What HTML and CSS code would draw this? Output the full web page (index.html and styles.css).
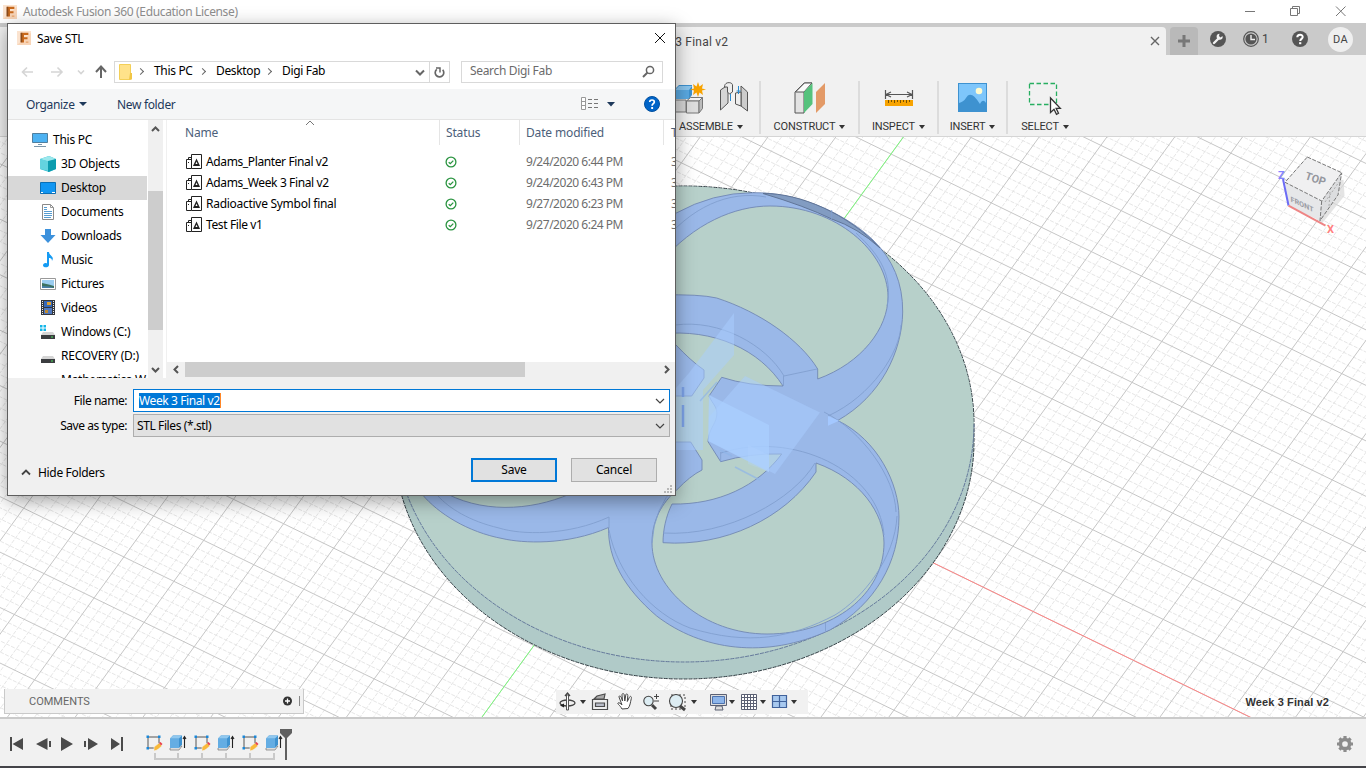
FILE: index.html
```html
<!DOCTYPE html>
<html lang="en">
<head>
<meta charset="utf-8">
<title>Autodesk Fusion 360 (Education License)</title>
<link rel="stylesheet" href="styles.css">
</head>
<body>
<svg width="0" height="0" class="defs">
  <defs>
    <symbol id="fusion" viewBox="0 0 16 16"><rect width="16" height="16" fill="#fbe3cf"/><path d="M0 16 16 2V16Z" fill="#f8d5b8"/><path d="M5 2h8v2.500H8v2.500h4v2.500H8V13H5Z" fill="#c8691c"/><path d="M4 2h2v11H4z" fill="#8b4a1a"/><path d="M10 12h3v1.500h-3z" fill="#e9a56d"/></symbol>
    <symbol id="stl" viewBox="0 0 16 16"><path d="M5.500 14.500V.500h10v14ZM5 5.500H.500v9h5M2.500 5.500v-2h3" fill="#fff" stroke="#222" stroke-width="1"/><path d="M10.500 4.500 7 12H14Z" fill="#222"/><path d="m10.500 7.500-1 2.500h2Z" fill="#fff"/><path d="M2.500 8v1" stroke="#222"/></symbol>
    <symbol id="ok" viewBox="0 0 12 12"><circle cx="6" cy="6" r="4.900" fill="#fff" stroke="#2a9440" stroke-width="1.300"/><path d="M3.700 6.200 5.300 7.700 8.300 4.600" fill="none" stroke="#2a9440" stroke-width="1.300"/></symbol>
    <symbol id="drive" viewBox="0 0 16 16"><path d="M3 8h10l2 3H1Z" fill="#d5d5d5"/><path d="M1 11h14v4H1z" fill="#3b3d40"/><path d="M11 12.500h2v1h-2z" fill="#4be05a"/></symbol>
    <symbol id="sketch" viewBox="0 0 18 18"><path d="M3 3h11v11H3z" fill="none" stroke="#555" stroke-width="1"/><path d="M1.500 1.500h2.500v2.500H1.500zM13 1.500h2.500v2.500H13zM1.500 13h2.500v2.500H1.500z" fill="#1b87d8"/><path d="m9 13 5-4 3 3-5 4-3 1Z" fill="#f9b93a" stroke="#f2f2f2" stroke-width=".6"/><path d="m14 9 1.500-1 2 2-1.500 1.500Z" fill="#e8404b"/></symbol>
    <symbol id="extrude" viewBox="0 0 18 18"><path d="m1 14 3-2h9l-3 4H1Z" fill="#ddd" stroke="#777" stroke-width=".7"/><path d="M1 4.500 4 1.500h9v9L10 14H1Z" fill="#3e92d0"/><path d="M1 4.500h9V14H1z" fill="#64ade3"/><path d="M1 4.500 4 1.500h9l-3 3Z" fill="#90c8ef"/><path d="M15.500 14V3M14 5l1.500-2.500L17 5" fill="none" stroke="#222" stroke-width="1.100"/></symbol>
  </defs>
</svg>
<div class="app">
  <header class="titlebar">
    <svg class="i16 applogo"><use href="#fusion"/></svg>
    <span class="app-title">Autodesk Fusion 360 (Education License)</span>
    <svg class="winctl" width="110" height="22" viewBox="0 0 110 22" fill="none" stroke="#777"><path d="M5 10.500h10M50.500 7.500h7v7h-7zM52.500 7.500v-2h7v7h-2M96 5.500l9.500 9.500M105.500 5.500 96 15"/></svg>
  </header>
  <div class="tabbar">
    <div class="tab"><span class="tab-name">Week 3 Final v2</span>
      <svg width="12" height="12" viewBox="0 0 12 12" stroke="#666" stroke-width="1.400"><path d="m2 2 8 8M10 2 2 10"/></svg></div>
    <div class="newtab"><svg width="14" height="14" viewBox="0 0 14 14" stroke="#777" stroke-width="3"><path d="M7 1v12M1 7h12"/></svg></div>
    <svg class="t-ext" width="16" height="16" viewBox="0 0 16 16"><circle cx="8" cy="8" r="8" fill="#555"/><path d="m4 12 4.500-4.500" stroke="#f1f1f1" stroke-width="2.400" stroke-linecap="round"/><path d="M12.500 5a3 3 0 1 1-3-2.200L9 5l1.500 1.400Z" fill="#f1f1f1"/></svg>
    <svg class="t-clock" width="16" height="16" viewBox="0 0 16 16"><circle cx="8" cy="8" r="7.300" fill="none" stroke="#555" stroke-width="1.200"/><circle cx="8" cy="8" r="5.600" fill="#555"/><path d="M8 4v4.500h4" fill="none" stroke="#eee" stroke-width="1.400"/></svg>
    <span class="t-num">1</span>
    <svg class="t-help" width="16" height="16" viewBox="0 0 16 16"><circle cx="8" cy="8" r="8" fill="#555"/><path d="M5.300 6.200C5.300 2.700 10.800 2.900 10.700 6c0 1.800-2.500 2-2.500 4" fill="none" stroke="#fff" stroke-width="2"/><path d="M7.100 11.200h2.200v2H7.100z" fill="#fff"/></svg>
    <span class="avatar">DA</span>
  </div>
  <div class="toolbar">
    <div class="tool assemble">
      <div class="icons">
      <svg width="34" height="34" viewBox="0 0 34 34"><path d="M1 7 5 3h13v10l-3 4H1Z" fill="#3e92d0"/><path d="M1 8h14v9H1z" fill="#5aa9e2"/><path d="m1 8 4-4h13l-3 4Z" fill="#8bc6ef"/><path d="M0 18h12v12H0" fill="#d5d5d5" stroke="#777"/><path d="m12.500 19 4-3.500h12l-3.500 3.500Z" fill="#f5f5f5" stroke="#777"/><path d="M12.500 19H25v12H12.500z" fill="#ddd" stroke="#777"/><path d="m25 19 3.500-3.500v11L25 31Z" fill="#bbb" stroke="#777"/><path d="m24 0 1.500 4.500L29 2l-1 4.500 4 1-4 1 1 4.500-3.500-2.500L24 15l-1.500-4.500L19 13l1-4.500-4-1 4-1L19 2l3.500 2.500Z" fill="#f7a300"/></svg>
      <svg width="30" height="30" viewBox="0 0 30 30"><path d="M1.500 8 9 3v18l-7.500 7Z" fill="#d5d5d5" stroke="#555"/><path d="M5.500 5c0-6 8-5 8-2v7l-3 2-2-2V5Z" fill="#eee" stroke="#555"/><path d="m22 4 6.500 6v19L22 24Z" fill="#ccc" stroke="#555"/><path d="m16.500 11 5.500-1v14l-5.500-2Z" fill="#eee" stroke="#555"/><path d="M19.500 4v8M17.500 9h4M11.500 12v7" fill="none" stroke="#288bd0"/></svg>
      </div><span class="tlabel">ASSEMBLE<i></i></span>
    </div>
    <div class="tool construct"><div class="icons"><svg width="32" height="32" viewBox="0 0 32 32"><path d="M1 10 10 1h8l-8 8v22H1Z" fill="#e3e3e3" stroke="#555"/><path d="m1.500 10 9-9H18l-8 9Z" fill="#fafafa" stroke="#555"/><path d="M10 10 18.500 1v21L10 31Z" fill="#55c27c"/><path d="M22 10 31 1v21l-9 9Z" fill="#e39a67"/></svg></div><span class="tlabel">CONSTRUCT<i></i></span></div>
    <div class="tool inspect"><div class="icons"><svg width="30" height="32" viewBox="0 0 30 32"><path d="M1.500 8v9M28.500 8v9M2 12.500h26M7 10l-5 2.500L7 15M23 10l5 2.500-5 2.500" fill="none" stroke="#555" stroke-width="1.200"/><path d="M1 18h28v6H1z" fill="#f7a300"/><path d="M4.500 18v3M7.500 18v2M10.500 18v3M13.500 18v2M16.500 18v3M19.500 18v2M22.500 18v3M25.500 18v2" stroke="#765000"/></svg></div><span class="tlabel">INSPECT<i></i></span></div>
    <div class="tool insert"><div class="icons"><svg width="29" height="30" viewBox="0 0 29 30"><path d="M0 1h29v29H0z" fill="#3e92d0"/><path d="M1 2h27v19c-2-3-4-3-6 1-6-10-11-12-14-6-2 3-4 4-7 5Z" fill="#7ec6fb"/><circle cx="21" cy="9" r="3.300" fill="#fffbd0"/></svg></div><span class="tlabel">INSERT<i></i></span></div>
    <div class="tool select"><div class="icons"><svg width="34" height="34" viewBox="0 0 34 34"><rect x="1.500" y="1.500" width="27" height="21" fill="none" stroke="#27ae60" stroke-width="1.300" stroke-dasharray="4.500 2.500"/><path d="M22.500 16v14.500l3.500-3.200 2.500 5 2-1-2.400-5h4.200Z" fill="#fff" stroke="#333" stroke-width="1.300"/></svg></div><span class="tlabel">SELECT<i></i></span></div>
  </div>
  <main class="viewport">
    <svg class="scene" width="1366" height="580" viewBox="0 137 1366 580">
      <path id="minor" stroke="#e6e6e6" stroke-dasharray="4 1.500"/><path id="major" stroke="#c6c6c6"/>
      <path d="M903.300 137 482 717" stroke="#7dfb7d"/><path d="M684 441.500 1252 718" stroke="#ff8585"/>
      <g>
        <path d="M394 424A290 238 0 0 1 974 424V441A290 238 0 0 1 394 441Z" fill="#b0cac8" stroke="#333f45" stroke-dasharray="4 1"/>
        <ellipse cx="684" cy="424" rx="289.500" ry="237.500" fill="#b7d0ca"/>
        <path d="M974 424A290 238 0 0 1 394 424" fill="none" stroke="#65799b" stroke-dasharray="4 1"/>
      </g>
      <g stroke="#7288b3" stroke-width=".9">
        <path fill="#9ab8e8" d="M640 230 675.700 213.300Q713 192.700 753 192.700C800 192 847 215 873 240Q903 269 902.700 312C902 352 881 396 837.700 420.500C878 440 899 484 899 517C899 561 876 604 830 630C765 660 701 650 656.700 616C624 588 608 559 608.500 527.500C566 546 522 543 503 538.700C467 532 438 513 422.700 495L400 440 500 300Z"/>
        <path fill="#b7d0ca" d="M440 490C480 514 530 511 570 494L570 480H440Z"/>
        <path fill="#b7d0ca" d="M660 263C694 223 735 206 770 206C836 206 888 252 888 297C888 328 862 363 817.700 379V369C800 340 760 312 716.700 298Q700 294 660 295Z"/>
        <path fill="#b7d0ca" d="M660 334C714 328 760 350 783 386Q748 386 721.700 377.300L709 396C713 405 718 407 716.700 416C715 426 709 428 708 441.700L720.700 461.700Q750 453 781.700 454C758 486 718 505 672 504C666 516 663 530 663 542.700C724 547 784 519 816 472V463C861 479 884 514 884 543C884 594 834 634 767 634C704 634 652 589 652 543C652 520 662 503 676.700 490Q690 476 702 470V460L690.700 442H660V396H691.700L704 378V370Q691 361 675 344Z"/>
        <path fill="#829cc2" stroke="#5b6f91" d="M763 193.500C800 193 848 214 880 248Q858 228 831.700 219 805 206 763 193.500Z"/>
        <g fill="none" stroke="#819fcf">
          <path d="M660 246C690 207 729 190 766 197M831.700 210v9M675 325C720 319 766 345 784 376L817 369M783.500 376v10M828 416C872 396 900 352 901 325M856 233C881 256 893 277 887 306"/>
          <path d="M721 453C792 430 879 470 884 535M720.700 452v10M824 412C862 431 895 477 896 512M663 533C728 537 794 499 815 463M609 517v11M609 517C568 536 521 535 499 528 469 521 449 508 438 496M609 530C617 574 652 614 690 628C749 646 791 638 835 615 863 598 895 558 897 516M825.500 623v8M652 543Q654 507 676 486"/>
        </g>
      </g>
      <g>
        <path d="M734 313v42l-31 35v60h-27v-62l13-15Z" fill="#a9cdff" opacity=".5"/>
        <path d="m745 376 75 36.500L775 474l-66-33v-24Z" fill="#a9cdff" opacity=".5"/>
        <path d="m709 395 60 30v47l-61-31Z" fill="#a9cfff" opacity=".75"/>
        <path d="m748 445 21 10v17l-21-8Z" fill="#b3d5ff" opacity=".3"/>
        <path d="m828 416 11 4.700-11 5Z" fill="#a4c8ff"/>
        <path d="M683 405v22M683 387v10" stroke="#7da3e9" stroke-width="2.500"/>
        <path d="m700 401 17-19M720 450l12 6M735 467l25 13" stroke="#8fb5e8" stroke-width="1.500" opacity=".7"/>
      </g>
      <g class="cube">
        <path d="m1320 222 22-27-1-15" fill="none" stroke="#d9d9d9" stroke-width="5" opacity=".7"/>
        <path d="m1285 182.300 36.700 18.700-1.700 19.700-31.700-15Z" fill="#e6e7e9"/><path d="m1321.700 201 20-28.300L1338 195l-18 25.700Z" fill="#dcdddf"/>
        <path d="m1307.300 157 34.400 15.700-20 28.300-36.700-18.700Z" fill="#f0f0f1"/>
        <path d="m1307.300 157 34.400 15.700-20 28.300-36.700-18.700ZM1321.700 201l-1.700 19.700 18-25.700 3.700-22.300" fill="none" stroke="#777" stroke-dasharray="4 1.500"/>
        <path d="m1330 192-1 14M1325 202l14-20" stroke="#aaa" stroke-dasharray="2 2"/>
        <path d="m1283 179 5.500 26.500" stroke="#6c6cf5" stroke-width="2"/><path d="m1288.500 205.700 37 20" stroke="#ee8585" stroke-width="2"/>
        <text transform="matrix(.93 .32 -.3 .95 1304.500 179)" class="facet">TOP</text><text transform="matrix(.9 .42 .05 .9 1291 206)" class="facef" y="-5">FRONT</text>
        <text x="1278" y="179" class="axis" fill="#8585ff">Z</text><text x="1327" y="232.500" class="axis" fill="#ff8080">X</text>
      </g>
    </svg>
    <div class="comments"><span>COMMENTS</span><svg width="18" height="14" viewBox="0 0 18 14"><circle cx="3.500" cy="7" r="4.500" transform="translate(1 0)" fill="#333"/><path d="M4.500 4.500v5M2 7h5" stroke="#fff" stroke-width="1.300"/><path d="M16.500 2v10" stroke="#888"/></svg></div>
    <div class="navbar">
      <svg width="249" height="24" viewBox="0 0 249 24">
        <g fill="none" stroke="#444" stroke-width="1.300"><ellipse cx="11.500" cy="13" rx="7.500" ry="3"/><path d="M10.500 5h2v15h-2z" fill="#fff" stroke="#555" stroke-width="1"/><path d="m9 6 2.500-3L14 6"/><path d="m4 15.500 4-2v4Z" fill="#222" stroke="none"/></g>
        <g fill="#eee" stroke="#4b4b4b" stroke-width="1.200"><path d="m38 9 3-3 8-2-1 5Z" fill="#aaa"/><path d="M36.500 9.500h15v10h-15z"/><path d="M39.500 13h9v3.500h-9z" fill="#b8bcc8"/></g>
        <path d="M66 19c-2-4-5-5-4-6s3 1 4 2L63 7c0-2 2-1 2.500 1l1 3-.5-6c0-2 2-2 2.200 0l.6 6 1-6c.5-2 2-1 2 .5l-.5 6 2-4c1-2 2.500-1 2 1-1 4-1 7-3.300 10Z" fill="#fff" stroke="#444"/>
        <g stroke="#444"><circle cx="92.500" cy="11" r="4.700" fill="#ddedf3" stroke-width="1.100"/><path d="m96 15 4 4" stroke-width="3"/><path d="M98 6.500h5M100.500 4v5M98 11h5"/><path d="M115 5h14v14h-14z" fill="none" stroke-dasharray="2 2"/><circle cx="120" cy="11" r="6.500" fill="#ddedf3" stroke-width="1.100"/><path d="m124 16 5 4" stroke-width="3"/></g>
        <g stroke="#5b6073"><path d="M154.500 4.500h16v11h-16z" fill="#ddd"/><path d="M156.500 6.500h12v7h-12z" fill="#8db5ea" stroke="#4d72ae"/><path d="M160 16h6l1 4h-8Z" fill="#ddd"/><path d="M185.500 4.500h15v15h-15z" fill="#fff"/><path d="M188.500 4.500v15M191.500 4.500v15M194.500 4.500v15M197.500 4.500v15M185.500 7.500h15M185.500 10.500h15M185.500 13.500h15M185.500 16.500h15"/><path d="M216.500 5.500h7v6h-7zM223.500 5.500h7v6h-7zM216.500 11.500h7v6h-7zM223.500 11.500h7v6h-7z" fill="#a8c9ef" stroke="#40629b" stroke-width="1.200"/></g>
        <path d="M24 10h6l-3 4ZM135 10h6l-3 4ZM173 10h6l-3 4ZM204 10h6l-3 4ZM235 10h6l-3 4Z" fill="#333"/>
      </svg>
    </div>
    <span class="docname">Week 3 Final v2</span>
  </main>
  <footer class="timeline">
    <svg class="play" width="125" height="20" viewBox="0 0 125 20" fill="#4b4b4b"><path d="M3 3h2v14H3zM16 4v12L5.500 10ZM40.500 4v12L29 10ZM38 7h1v6h-1zM42 7h2v6h-2zM54 3l12 7-12 7ZM77 7h2v6h-2zM81 4l10 6-10 6ZM104 4l9 6-9 6ZM114 3h2v14h-2z"/></svg>
    <div class="features">
      <div class="frow"><svg><use href="#sketch"/></svg><svg><use href="#extrude"/></svg><svg><use href="#sketch"/></svg><svg><use href="#extrude"/></svg><svg><use href="#sketch"/></svg><svg><use href="#extrude"/></svg></div>
      <svg width="124" height="8" viewBox="0 0 124 8" fill="none" stroke="#c9c9c9" stroke-width="2"><path d="M2 0v6h119V0M25 0v6M49 0v6M73 0v6M97 0v6"/></svg>
    </div>
    <svg class="marker" width="14" height="34" viewBox="0 0 14 34" fill="#606060"><path d="M1 1h12v4L8 10v22H6V10L1 5Z"/></svg>
    <svg class="gear" width="18" height="18" viewBox="-9 -9 18 18"><circle r="4.600" fill="none" stroke="#8c8c8c" stroke-width="3.500"/><path d="M0-8v3M0 8V5M-8 0h3M8 0H5M-5.600-5.600l2 2M5.600 5.600l-2-2M-5.600 5.600l2-2M5.600-5.600l-2 2" stroke="#8c8c8c" stroke-width="3.200"/></svg>
  </footer>
  <div class="taskline"></div>
</div>

<section class="dialog">
  <div class="d-title"><svg class="i16"><use href="#fusion"/></svg><span>Save STL</span><svg class="d-close" width="12" height="12" viewBox="0 0 12 12" stroke="#111"><path d="m1 1 10 10M11 1 1 11"/></svg></div>
  <div class="d-nav">
    <svg width="94" height="20" viewBox="0 0 94 20" fill="none" stroke="#d5d5d5" stroke-width="1.600"><path d="M13 10H2.500M7 5.500 2.500 10 7 14.500M31 10h11M37.500 5.500 42 10l-4.500 4.500M58 8.500l3 3 3-3"/><path d="M81 16V5M76 10l5-5.500 5 5.500" stroke="#666" stroke-width="2"/></svg>
    <div class="address">
      <svg width="14" height="16" viewBox="0 0 14 16"><path d="M.5.500h11v15H.500z" fill="#ffe28a" stroke="#f3cf58"/><path d="M11 9h2v6.500h-3Z" fill="#f1c646"/></svg>
      <b class="chev"></b><span class="p1">This PC</span><b class="chev"></b><span class="p2">Desktop</span><b class="chev"></b><span class="p3">Digi Fab</span>
      <svg class="adr-r" width="36" height="20" viewBox="0 0 36 20" fill="none" stroke="#666"><path d="m2 8.500 4 4 4-4" stroke-width="2"/><path d="M15.500 0v20" stroke="#d9d9d9"/><path d="M22.800 7.300a4.300 4.300 0 1 0 5.900.5" stroke-width="1.700"/><path d="M22 6h4v4.500" stroke-width="1.500"/></svg>
    </div>
    <div class="search"><span>Search Digi Fab</span><svg width="13" height="13" viewBox="0 0 13 13" fill="none" stroke="#666"><circle cx="8" cy="5" r="3.600" stroke-width="1.500"/><path d="M5.500 7.500 1 12" stroke-width="2"/></svg></div>
  </div>
  <div class="d-cmd"><span class="organize">Organize</span><i></i><span class="newfolder">New folder</span>
    <svg class="view" width="36" height="14" viewBox="0 0 36 14"><path d="M.5.500h4v12h-4ZM.5 4.500h4M.5 8.500h4" fill="#fff" stroke="#999"/><path d="M7 2.500h4M13 2.500h4M7 6.500h4M13 6.500h4M7 10.500h4M13 10.500h4" stroke="#777"/><path d="M26 5h8l-4 4.500Z" fill="#1e395b"/></svg>
    <svg class="help" width="16" height="16" viewBox="0 0 16 16"><circle cx="8" cy="8" r="7.500" fill="#0064c8" stroke="#02509f"/><path d="M5.700 6C5.700 3.300 10.300 3.300 10.300 6c0 1.700-2.200 1.800-2.200 3.800" fill="none" stroke="#fff" stroke-width="1.700"/><path d="M7.200 11h1.900v2H7.200z" fill="#fff"/></svg>
  </div>
  <div class="d-body">
    <div class="tree">
      <div class="node root"><svg viewBox="0 0 16 16"><path d="M.5 1.500h15v9H.500z" fill="#4db2f2" stroke="#4f7f9f"/><path d="M2 14.500h12M6 12.500h4" stroke="#7b97aa"/></svg><span>This PC</span></div>
      <div class="node"><svg viewBox="0 0 16 16"><path d="M0 3 9 0l7 3v10l-7 3-9-3Z" fill="#23b4c8"/><path d="M0 3 9 0l7 3-7 3Z" fill="#9ce8ed"/><path d="M0 3 8 5v10l-8-2Z" fill="#63d3df"/><path d="M8 5l8-2v10l-8 3Z" fill="#0c9caf"/></svg><span>3D Objects</span></div>
      <div class="node sel"><svg viewBox="0 0 16 16"><path d="M.5 2.500h15v11H.500z" fill="#1196f2" stroke="#0b6fb5"/><path d="M1 12.500h2M12 12.500h3" stroke="#fff"/></svg><span>Desktop</span></div>
      <div class="node"><svg viewBox="0 0 16 16"><path d="M2.500.500h8l3 3v12h-11Z" fill="#fff" stroke="#8a8a8a"/><path d="M4 3.500h3M4 5.500h3M4 7.500h8M4 9.500h8M4 11.500h8M4 13.500h7" stroke="#579cd0"/><path d="M10.500.500v3h3" fill="none" stroke="#999"/></svg><span>Documents</span></div>
      <div class="node"><svg viewBox="0 0 16 16"><path d="M5 1h6v6h4.500L8 15 .5 7H5Z" fill="#3c91dc"/></svg><span>Downloads</span></div>
      <div class="node"><svg viewBox="0 0 16 16"><path d="M7 0h2c0 4 6 4 3 9 0-3-2-3-3-3v7c0 3-6 3-6 .500 0-2 2-3 4-2Z" fill="#159bf3"/></svg><span>Music</span></div>
      <div class="node"><svg viewBox="0 0 16 16"><path d="M.5 2.500h15v11H.500z" fill="#fff" stroke="#999"/><path d="M2 4h12v8H2z" fill="#9bcdf0"/><path d="M2 7q5 1 12 3v2H2Z" fill="#3c7160"/><path d="M2 10q8 0 12 2H2Z" fill="#477ea7"/></svg><span>Pictures</span></div>
      <div class="node"><svg viewBox="0 0 16 16"><path d="M1 0h14v15H1z" fill="#34383d"/><path d="M4 1h8v6H4z" fill="#3468ba"/><path d="M4 8h8v6H4z" fill="#5079bf"/><path d="M7 2h4v3H7z" fill="#e0a12f"/><path d="M5 10h3v3H5z" fill="#bc8a35"/><path d="M2.500 1v14M13.500 1v14" stroke="#eee" stroke-dasharray="1 1"/></svg><span>Videos</span></div>
      <div class="node"><svg viewBox="0 0 16 16"><use href="#drive"/><path d="M0 0h7v7H0z" fill="#fff"/><path d="M0 1h2.500v2.500H0zM3.500 1H6v2.500H3.500zM0 4.500h2.500V7H0zM3.500 4.500H6V7H3.500z" fill="#13b5e8"/></svg><span>Windows (C:)</span></div>
      <div class="node"><svg><use href="#drive"/></svg><span>RECOVERY (D:)</span></div>
      <div class="node last"><svg><use href="#drive"/></svg><span>Mathematica W</span></div>
    </div>
    <div class="vscroll"><svg width="15" height="16" viewBox="0 0 15 16" fill="none" stroke="#555" stroke-width="2"><path d="m4 11 3.500-3.500L11 11"/></svg><div class="vthumb"></div><svg width="15" height="16" viewBox="0 0 15 16" fill="none" stroke="#555" stroke-width="2"><path d="m4 6 3.500 3.500L11 6"/></svg></div>
    <div class="files">
      <div class="frow-h"><span class="c1">Name<svg width="10" height="6" viewBox="0 0 10 6" fill="none" stroke="#777"><path d="m1 5 4-4 4 4"/></svg></span><span class="c2">Status</span><span class="c3">Date modified</span><span class="c4">Type</span></div>
      <div class="file"><span class="c1"><svg><use href="#stl"/></svg>Adams_Planter Final v2</span><span class="c2"><svg><use href="#ok"/></svg></span><span class="c3">9/24/2020 6:44 PM</span><span class="c4">3D</span></div>
      <div class="file"><span class="c1"><svg><use href="#stl"/></svg>Adams_Week 3 Final v2</span><span class="c2"><svg><use href="#ok"/></svg></span><span class="c3">9/24/2020 6:43 PM</span><span class="c4">3D</span></div>
      <div class="file"><span class="c1 wide"><svg><use href="#stl"/></svg>Radioactive Symbol final</span><span class="c2"><svg><use href="#ok"/></svg></span><span class="c3">9/27/2020 6:23 PM</span><span class="c4">3D</span></div>
      <div class="file"><span class="c1"><svg><use href="#stl"/></svg>Test File v1</span><span class="c2"><svg><use href="#ok"/></svg></span><span class="c3">9/27/2020 6:24 PM</span><span class="c4">3D</span></div>
      <div class="hscroll"><svg width="17" height="15" viewBox="0 0 17 15" fill="none" stroke="#555" stroke-width="2"><path d="M10.500 4 7 7.500l3.500 3.500"/></svg><div class="hthumb"></div><svg class="hr" width="17" height="15" viewBox="0 0 17 15" fill="none" stroke="#555" stroke-width="2"><path d="M7 4l3.500 3.500L7 11"/></svg></div>
    </div>
  </div>
  <div class="d-foot">
    <div class="field"><label>File name:</label><div class="box edit"><span class="hl">Week 3 Final v2</span><svg width="10" height="6" viewBox="0 0 10 6"><path d="m1 1 4 4 4-4" fill="none" stroke="#444" stroke-width="1.200"/></svg></div></div>
    <div class="field"><label>Save as type:</label><div class="box type"><span>STL Files (*.stl)</span><svg width="10" height="6" viewBox="0 0 10 6"><path d="m1 1 4 4 4-4" fill="none" stroke="#444" stroke-width="1.200"/></svg></div></div>
    <div class="actions"><svg width="10" height="7" viewBox="0 0 10 7"><path d="m1 5.500 4-4 4 4" fill="none" stroke="#444" stroke-width="1.800"/></svg><span class="hide">Hide Folders</span><div class="btn save">Save</div><div class="btn">Cancel</div></div>
    <svg class="grip" width="9" height="9" viewBox="0 0 9 9" fill="#b8b8b8"><path d="M6 0h2v2H6zM3 3h2v2H3zM6 3h2v2H6zM0 6h2v2H0zM3 6h2v2H3zM6 6h2v2H6z"/></svg>
  </div>
</section>
<script src="grid.js"></script>
</body>
</html>
```
FILE: styles.css
```css
* { box-sizing: border-box; }
body { margin: 0; width: 1366px; height: 768px; overflow: hidden; font-family: "Noto Sans", sans-serif; font-size: 12px; color: #000; }
svg { display: block; flex: none; }
.defs { position: absolute; }
.i16 { width: 14px; height: 14px; }
.app { display: flex; flex-direction: column; height: 768px; background: #f1f1f1; }
.titlebar { height: 23px; flex: none; display: flex; align-items: center; padding-left: 3px; background: #fff; color: #8e8e8e; }
.applogo { margin-right: 6px; }
.app-title { letter-spacing: -.35px; white-space: nowrap; }
.winctl { margin-left: auto; margin-right: 16px; }
.tabbar { height: 32px; flex: none; background: #cacaca; display: flex; align-items: center; }
.tab { width: 1166px; height: 28px; align-self: flex-end; background: #f1f1f1; border-radius: 0 4px 0 0; display: flex; align-items: center; justify-content: space-between; padding: 0 5px 0 642px; color: #444; font: 12px Roboto, sans-serif; }
.tab-name { padding-top: 2px; letter-spacing: .2px; }
.newtab { width: 28px; height: 28px; align-self: flex-end; margin-left: 4px; background: #b9b9b9; border-radius: 4px 4px 0 0; display: grid; place-items: center; }
.t-ext { margin-left: 12px; }
.t-clock { margin-left: 17px; }
.t-num { font: 12px Roboto, sans-serif; color: #444; width: 9px; margin-left: 3px; }
.t-help { margin-left: 21px; }
.avatar { width: 25px; height: 25px; margin-left: 20px; border-radius: 50%; background: #efefef; color: #444; font: 11px/25px Roboto, sans-serif; text-align: center; letter-spacing: .4px; }
.toolbar { height: 82px; flex: none; border-bottom: 1px solid #d5d5d5; display: flex; padding: 26px 0 2px 675px; }
.tool { height: 53px; border-right: 2px solid #dcdcdc; display: flex; flex-direction: column; align-items: center; justify-content: space-between; }
.tool .icons { height: 37px; padding-top: 1px; display: flex; gap: 11px; align-items: flex-start; }
.assemble { width: 86px; align-items: flex-start; }
.assemble .icons { margin-left: -1px; }
.construct { width: 99px; }
.inspect { width: 79px; }
.insert { width: 69px; }
.select { width: 74px; border: 0; }
.tlabel { font: 11px/14px Roboto, sans-serif; letter-spacing: -.15px; color: #333; white-space: nowrap; display: flex; align-items: center; gap: 4px; }
.assemble .tlabel { margin-left: 4px; }
.tlabel i { border: 3px solid transparent; border-top: 4px solid #333; border-bottom: 0; }
.viewport { height: 580px; flex: none; background: #fff; display: grid; grid-template-columns: 556px 252px 1fr; align-items: end; }
.scene { grid-area: 1 / 1 / 2 / 4; fill: none; }
.facet { font: bold 11px Roboto, sans-serif; fill: #95979e; }
.facef { font: bold 8px Roboto, sans-serif; fill: #999ba3; }
.axis { font: bold 11px Roboto, sans-serif; }
.comments { grid-area: 1 / 1; width: 300px; height: 25px; margin: 0 0 3px 4px; background: #f1f1f1; border: solid #c9c9c9; border-width: 0 1px 1px; display: flex; align-items: center; justify-content: space-between; padding: 0 2px 0 24px; font: 11px Roboto, sans-serif; color: #666; }
.navbar { grid-area: 1 / 2; height: 24px; margin-bottom: 3px; background: #f1f1f1; }
.docname { grid-area: 1 / 3; justify-self: end; margin: 0 37px 7px 0; font: bold 11px/16px "Liberation Sans", sans-serif; letter-spacing: .12px; color: #333; }
.timeline { height: 49px; flex: none; border-top: 2px solid #cacaca; background: #f1f1f1; display: flex; align-items: flex-start; padding-left: 7px; }
.play { margin-top: 15px; }
.features { margin: 15px 0 0 13px; width: 132px; display: flex; flex-direction: column; gap: 1px; }
.frow { display: flex; gap: 6px; }
.frow svg { width: 18px; height: 18px; }
.features > svg { margin-left: 8px; }
.marker { margin: 9px 0 0 2px; }
.gear { margin: 16px 12px 0 auto; }
.taskline { flex: 1; background: #444449; }

.dialog { position: absolute; left: 7px; top: 23px; width: 669px; height: 473px; border: 1px solid #5e5e5e; background: #fff; box-shadow: 0 5px 18px rgba(0,0,0,.38); display: flex; flex-direction: column; letter-spacing: -.33px; }
.d-title { height: 30px; display: flex; align-items: center; padding: 0 9px 2px; gap: 6px; }
.d-close { margin-left: auto; }
.d-nav { height: 35px; display: flex; align-items: center; padding: 0 12px; }
.d-nav span { position: relative; top: -1px; }
.address { width: 336px; height: 22px; border: 1px solid #d9d9d9; display: flex; align-items: center; padding-left: 4px; }
.chev { width: 5px; height: 5px; border: solid #666; border-width: 1.500px 1.500px 0 0; transform: rotate(45deg); margin: 0 11px 0 5px; }
.p1, .p2, .p3 { white-space: nowrap; }
.p1 { width: 38px; margin-right: 3px; } .p2 { width: 43px; margin-right: 2px; }
.adr-r { margin-left: auto; margin-right: -1px; }
.search { width: 202px; height: 22px; margin-left: 11px; border: 1px solid #d9d9d9; display: flex; align-items: center; justify-content: space-between; padding: 0 7px 0 8px; color: #6b6b6b; }
.d-cmd { height: 31px; background: #f5f6f7; border-bottom: 1px solid #e4e4e4; display: flex; align-items: center; padding: 0 15px 0 18px; color: #1e395b; }
.organize { width: 49px; white-space: nowrap; }
.d-cmd i { border: 4px solid transparent; border-top-color: #1e395b; border-bottom: 0; margin: 0 30px 0 4px; }
.view { margin-left: auto; }
.help { margin-left: 27px; }
.d-body { height: 258px; display: flex; overflow: hidden; }
.tree { width: 140px; height: 258px; padding-top: 8px; overflow: hidden; }
.node { height: 24px; width: 139px; padding-left: 32px; display: flex; align-items: center; gap: 5px; white-space: nowrap; overflow: hidden; letter-spacing: -.25px; }
.node span { padding-bottom: 2px; }
.node svg { width: 16px; height: 16px; }
.root { padding-left: 24px; }
.sel { background: #d8d8d8; }
.vscroll { width: 15px; background: #f0f0f0; display: flex; flex-direction: column; }
.vthumb { height: 139px; margin-top: 55px; background: #cdcdcd; }
.vscroll svg:last-child { margin-top: auto; }
.files { flex: 1; min-width: 0; overflow: hidden; margin-left: 3px; border-left: 1px solid #f0f0f0; display: flex; flex-direction: column; }
.frow-h, .file { display: flex; width: 540px; flex: none; }
.frow-h { height: 25px; color: #4c607a; margin-bottom: 6px; letter-spacing: -.15px; }
.frow-h span { height: 25px; line-height: 25px; flex: none; border-right: 1px solid #e5e5e5; }
.frow-h .c1 { display: flex; }
.frow-h .c1 svg { margin-left: 87px; }
.c1 { width: 273px; padding-left: 18px; }
.c2 { width: 80px; padding-left: 6px; }
.c3 { width: 144px; padding-left: 6px; }
.c4 { padding-left: 7px; white-space: nowrap; }
.file { height: 21px; align-items: center; }
.file .c1 { display: flex; align-items: center; gap: 4px; padding-left: 19px; letter-spacing: -.38px; }
.file .wide { letter-spacing: -.28px; }
.file .c1 svg { width: 16px; height: 16px; }
.file .c2 svg { width: 12px; height: 12px; margin-left: -1px; }
.file .c3, .file .c4 { color: #6d6d6d; letter-spacing: -.48px; }
.hscroll { height: 16px; margin-top: auto; background: #f0f0f0; display: flex; }
.hscroll svg:first-child { width: 18px; }
.hthumb { width: 340px; height: 15px; background: #cdcdcd; }
.hr { margin-left: auto; }
.d-foot { flex: 1; background: #f0f0f0; padding: 11px 5px 0 0; position: relative; }
.field { display: flex; align-items: center; height: 23px; margin-bottom: 2px; letter-spacing: -.3px; }
.field label { width: 119px; margin-right: 6px; text-align: right; letter-spacing: -.45px; }
.box { width: 537px; height: 23px; border: 1px solid #adadad; background: #e1e1e1; display: flex; align-items: center; justify-content: space-between; padding: 0 4px 0 3px; }
.type { letter-spacing: -.4px; }
.edit { background: #fff; border-color: #0078d7; padding-left: 5px; }
.hl { background: #0078d7; color: #fff; line-height: 15px; border-right: 1px solid #ff8728; letter-spacing: -.4px; margin-bottom: 1px; }
.actions { display: flex; align-items: center; margin-top: 21px; padding-left: 13px; }
.actions > svg, .hide { margin-top: 5px; }
.hide { margin-left: 7px; margin-right: auto; }
.btn { width: 86px; height: 24px; margin-right: 13px; border: 1px solid #adadad; background: #e1e1e1; text-align: center; line-height: 21px; letter-spacing: -.2px; }
.save { border: 2px solid #0078d7; line-height: 19px; margin-right: 14px; }
.grip { position: absolute; right: 2px; bottom: 1px; }
```
FILE: grid.js
```js
// Ground-plane grid: ten-unit cells spanned by vectors a and b, five subdivisions each.
const o = [1083.3, 636], a = [50.07, 24.39], b = [29.77, -40.97];
let minor = "", major = "";
const at = (m, n) => (o[0] + m * a[0] + n * b[0]).toFixed(1) + " " + (o[1] + m * a[1] + n * b[1]).toFixed(1);
for (let i = -175; i <= 125; i++) {
  const k = i / 5;
  const d = "M" + at(k, -30) + "L" + at(k, 30) + "M" + at(-40, k) + "L" + at(40, k);
  if (i % 5 === 0) major += d; else minor += d;
}
document.getElementById("minor").setAttribute("d", minor);
document.getElementById("major").setAttribute("d", major);
```
